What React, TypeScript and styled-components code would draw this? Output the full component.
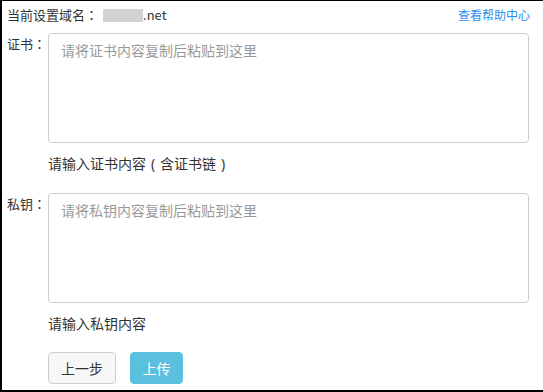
import React from "react";
import styled, { createGlobalStyle } from "styled-components";

const Global = createGlobalStyle`
  html, body { margin: 0; padding: 0; background: #fff; }
  body { font-family: "Microsoft YaHei", "Noto Sans CJK SC", "Noto Sans", sans-serif; }
  * { box-sizing: border-box; }
`;

const Frame = styled.div`
  width: 543px;
  height: 392px;
  border-top: 1px solid #000;
  border-left: 2px solid #000;
  border-bottom: 2px solid #000;
  padding: 5px 14px 0 5px;
  display: flex;
  flex-direction: column;
  color: #333;
  font-size: 14px;
`;

const Header = styled.div`
  display: flex;
  justify-content: space-between;
  align-items: center;
  height: 18px;
  line-height: 18px;
  margin-bottom: 9px;
  font-size: 13px;
`;

const Domain = styled.span`
  display: inline-flex;
  align-items: center;
`;

const Colon = styled.span`
  font-family: "Noto Sans CJK JP", "Noto Sans CJK SC", sans-serif;
`;

const Paren = styled.span`
  display: inline-block;
  width: 14px;
  text-align: center;
  font-family: "Noto Sans", "Noto Sans CJK SC", sans-serif;
`;

const Masked = styled.span`
  display: inline-block;
  width: 40px;
  height: 13px;
  margin-left: 5px;
  background: #d2d2d2;
  filter: blur(0.6px);
`;

const HelpLink = styled.a`
  font-size: 12px;
  color: #2d8cf0;
  text-decoration: none;
  margin-right: -1px;
`;

const Row = styled.div<{ $gap?: number }>`
  display: flex;
  margin-bottom: ${(p) => p.$gap ?? 0}px;
`;

const Label = styled.div`
  width: 41px;
  flex: none;
  padding-top: 1px;
  line-height: 20px;
  font-size: 13px;
`;

const Field = styled.div`
  flex: 1;
  display: flex;
  flex-direction: column;
`;

const Area = styled.textarea<{ $h: number }>`
  width: 100%;
  height: ${(p) => p.$h}px;
  border: 1px solid #ccc;
  border-radius: 4px;
  padding: 6px 12px;
  font-family: inherit;
  font-size: 14px;
  line-height: 20px;
  color: #333;
  resize: none;
  outline: none;
  &::placeholder { color: #999; }
`;

const Hint = styled.div`
  margin-top: 10px;
  line-height: 20px;
  color: #333;
`;

const Buttons = styled.div`
  display: flex;
  gap: 14px;
  padding-left: 41px;
`;

const Btn = styled.button<{ $primary?: boolean; $w: number }>`
  width: ${(p) => p.$w}px;
  height: 32px;
  border-radius: 4px;
  font-family: inherit;
  font-size: 14px;
  border: 1px solid ${(p) => (p.$primary ? "#5bc0de" : "#ccc")};
  background: ${(p) => (p.$primary ? "#5bc0de" : "#f7f7f7")};
  color: ${(p) => (p.$primary ? "#fff" : "#333")};
  padding: 0;
`;

export default function App() {
  return (
    <>
      <Global />
      <Frame>
        <Header>
          <Domain>
            当前设置域名<Colon>：</Colon>
            <Masked />.net
          </Domain>
          <HelpLink href="#">查看帮助中心</HelpLink>
        </Header>
        <Row $gap={19}>
          <Label>
            证书<Colon>：</Colon>
          </Label>
          <Field>
            <Area $h={110} placeholder="请将证书内容复制后粘贴到这里" />
            <Hint>
              请输入证书内容<Paren>(</Paren>含证书链<Paren>)</Paren>
            </Hint>
          </Field>
        </Row>
        <Row $gap={19}>
          <Label>
            私钥<Colon>：</Colon>
          </Label>
          <Field>
            <Area $h={110} placeholder="请将私钥内容复制后粘贴到这里" />
            <Hint>请输入私钥内容</Hint>
          </Field>
        </Row>
        <Buttons>
          <Btn $w={68}>上一步</Btn>
          <Btn $w={53} $primary>
            上传
          </Btn>
        </Buttons>
      </Frame>
    </>
  );
}
